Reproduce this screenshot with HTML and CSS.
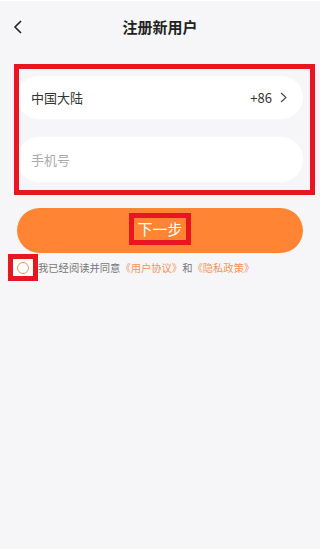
FILE: index.html
```html
<!DOCTYPE html>
<html lang="zh-CN">
<head>
    <meta charset="UTF-8">
    <meta name="viewport" content="width=device-width, initial-scale=1.0">
    <title>注册新用户</title>
    <link rel="stylesheet" href="styles.css">
</head>
<body>

    <div class="header">
        <span class="back">
            <svg width="10" height="14" viewBox="0 0 10 14"><path d="M8 1 L2 7 L8 13" fill="none" stroke="#222" stroke-width="1.6"/></svg>
        </span>
        <h1>注册新用户</h1>
        <span></span>
    </div>

    <div class="form">
        <div class="fields">
            <div class="row">
                <span>中国大陆</span>
                <span class="code">+86
                    <svg width="7" height="11" viewBox="0 0 7 11"><path d="M1 1 L6 5.5 L1 10" fill="none" stroke="#444" stroke-width="1.1"/></svg>
                </span>
            </div>
            <div class="row">
                <span class="placeholder">手机号</span>
            </div>
            <div class="mark mark-fields"></div>
        </div>

        <button class="next"><span class="next-label">下一步</span></button>

        <div class="agree">
            <span class="check"><span class="circle"></span></span>
            <span>我已经阅读并同意<a>《用户协议》</a>和<a>《隐私政策》</a></span>
        </div>
    </div>

</body>
</html>
```

FILE: styles.css
```css
body {
    margin: 0;
    background: #f6f6f8;
    font-family: "Noto Sans CJK SC", "Noto Sans", sans-serif;
    color: #333;
    border-top: 1px solid #fff;
}

.header {
    height: 51px;
    display: grid;
    grid-template-columns: 40px 1fr 40px;
    align-items: center;
}

.back {
    padding-left: 13px;
    display: flex;
    align-items: center;
}

.header h1 {
    margin: 0;
    text-align: center;
    font-size: 15px;
    font-weight: bold;
    color: #222;
}

.form {
    padding: 24px 17px 0;
}

.fields {
    position: relative;
    display: flex;
    flex-direction: column;
    gap: 18px;
}

.row {
    height: 43px;
    background: #fff;
    border-radius: 22px;
    padding: 0 16px 0 14px;
    display: flex;
    align-items: center;
    justify-content: space-between;
    font-size: 13px;
    color: #333;
}

.row + .row {
    height: 45px;
}

.code {
    display: flex;
    align-items: center;
    gap: 8px;
    color: #333;
}

.placeholder {
    color: #aaa;
}

.mark {
    position: absolute;
    border: 5px solid #e8161f;
}

.mark-fields {
    top: -12px;
    left: -3px;
    right: -12px;
    bottom: -13px;
}

.next {
    display: flex;
    align-items: center;
    justify-content: center;
    width: 100%;
    height: 45px;
    margin-top: 26px;
    border: none;
    border-radius: 23px;
    background: #ff8535;
    font-family: inherit;
    padding: 0;
}

.next-label {
    display: inline-block;
    border: 5px solid #e8161f;
    padding: 0 3px;
    line-height: 22px;
    font-size: 15px;
    color: #fff;
    margin-bottom: 4px;
}

.agree {
    display: flex;
    align-items: center;
    margin: 1px 0 0 -9px;
    font-size: 10.3px;
    color: #777;
}

.agree a {
    color: #f8945a;
}

.check {
    width: 30px;
    height: 27px;
    box-sizing: border-box;
    border: 5px solid #e8161f;
    background: #fff;
    display: flex;
    align-items: center;
    justify-content: center;
}

.circle {
    width: 10px;
    height: 10px;
    border: 1px solid #f8945a;
    border-radius: 50%;
}
```
